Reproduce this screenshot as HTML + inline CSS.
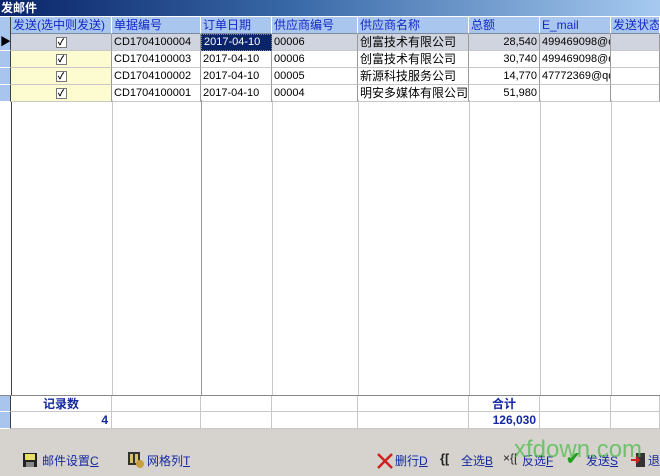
<!DOCTYPE html>
<html><head><meta charset="utf-8"><style>
*{margin:0;padding:0;box-sizing:border-box}
body{width:660px;height:476px;overflow:hidden;background:#fff;font-family:"Liberation Sans","Noto Sans CJK SC",sans-serif;font-size:11px;position:relative}
.a{position:absolute;white-space:nowrap;overflow:hidden}
#title{left:0;top:0;width:660px;height:16px;background:linear-gradient(90deg,#0a246a,#3a6aa8 45%,#a6caf0);color:#fff;font-weight:bold;font-size:12px;line-height:16px;padding-left:1px}
.h{top:17px;height:17px;background:#a8c6ee;color:#1428c8;line-height:16px;padding-left:2px;border-right:1px solid #fff;border-bottom:1px solid #7a8aa0;font-size:12px}
.c{height:17px;line-height:16px;padding:0 2px;border-right:1px solid #999;border-bottom:1px solid #c8c8c8;color:#000;font-size:11px}
.z{font-size:12px}
.r{text-align:right}
.rh{left:0;width:11px;height:17px;background:#a9c5ee;border-right:1px solid #404040;border-bottom:1px solid #fff}
.vl{top:100px;height:296px;width:1px;background:#c8c8c8}
.cb{display:inline-block;width:11px;height:11px;border:1px solid #777;background:#fff;font-size:9px;line-height:9px;text-align:center;vertical-align:middle;font-weight:bold}
.f{color:#1428a0;font-weight:bold;line-height:16px;height:17px;border-right:1px solid #c8c8c8;border-bottom:1px solid #c8c8c8;font-size:12px}
.tb{color:#1428a0;font-size:12px;top:452px}
u{text-decoration:underline}
</style></head><body>
<div class="a" id="title">发邮件</div>
<div class="a" style="left:0;top:17px;width:11px;height:17px;background:#a8c6ee;border-right:1px solid #404040"></div>
<div class="a h" style="left:11px;width:101px">发送(选中则发送)</div>
<div class="a h" style="left:112px;width:89px">单据编号</div>
<div class="a h" style="left:201px;width:71px">订单日期</div>
<div class="a h" style="left:272px;width:86px">供应商编号</div>
<div class="a h" style="left:358px;width:111px">供应商名称</div>
<div class="a h" style="left:469px;width:71px">总额</div>
<div class="a h" style="left:540px;width:71px">E_mail</div>
<div class="a h" style="left:611px;width:49px">发送状态</div>

<div class="a rh" style="top:34px;font-size:11px;line-height:16px;color:#000">&#9654;</div>
<div class="a rh" style="top:51px"></div>
<div class="a rh" style="top:68px"></div>
<div class="a rh" style="top:85px"></div>
<div class="a" style="left:11px;top:100px;width:1px;height:296px;background:#404040"></div>

<div class="a" style="left:11px;top:34px;width:649px;height:17px;background:#d0d4de"></div>
<div class="a" style="left:11px;top:51px;width:101px;height:51px;background:#fdfcd0"></div>

<div class="a c" style="left:11px;top:34px;width:101px;text-align:center"><span class="cb">✓</span></div>
<div class="a c" style="left:11px;top:51px;width:101px;text-align:center"><span class="cb">✓</span></div>
<div class="a c" style="left:11px;top:68px;width:101px;text-align:center"><span class="cb">✓</span></div>
<div class="a c" style="left:11px;top:85px;width:101px;text-align:center"><span class="cb">✓</span></div>

<div class="a c" style="left:112px;top:34px;width:89px">CD1704100004</div>
<div class="a c" style="left:112px;top:51px;width:89px">CD1704100003</div>
<div class="a c" style="left:112px;top:68px;width:89px">CD1704100002</div>
<div class="a c" style="left:112px;top:85px;width:89px">CD1704100001</div>

<div class="a c" style="left:201px;top:34px;width:71px;background:#0a246a;color:#fff;border:1px dotted #888;line-height:14px">2017-04-10</div>
<div class="a c" style="left:201px;top:51px;width:71px">2017-04-10</div>
<div class="a c" style="left:201px;top:68px;width:71px">2017-04-10</div>
<div class="a c" style="left:201px;top:85px;width:71px">2017-04-10</div>

<div class="a c" style="left:272px;top:34px;width:86px">00006</div>
<div class="a c" style="left:272px;top:51px;width:86px">00006</div>
<div class="a c" style="left:272px;top:68px;width:86px">00005</div>
<div class="a c" style="left:272px;top:85px;width:86px">00004</div>

<div class="a c z" style="left:358px;top:34px;width:111px">创富技术有限公司</div>
<div class="a c z" style="left:358px;top:51px;width:111px">创富技术有限公司</div>
<div class="a c z" style="left:358px;top:68px;width:111px">新源科技服务公司</div>
<div class="a c z" style="left:358px;top:85px;width:111px">明安多媒体有限公司</div>

<div class="a c r" style="left:469px;top:34px;width:71px">28,540</div>
<div class="a c r" style="left:469px;top:51px;width:71px">30,740</div>
<div class="a c r" style="left:469px;top:68px;width:71px">14,770</div>
<div class="a c r" style="left:469px;top:85px;width:71px">51,980</div>

<div class="a c" style="left:540px;top:34px;width:71px">499469098@qq</div>
<div class="a c" style="left:540px;top:51px;width:71px">499469098@qq</div>
<div class="a c" style="left:540px;top:68px;width:71px">47772369@qq</div>
<div class="a c" style="left:540px;top:85px;width:71px"></div>
<div class="a c" style="left:611px;top:34px;width:49px"></div>
<div class="a c" style="left:611px;top:51px;width:49px"></div>
<div class="a c" style="left:611px;top:68px;width:49px"></div>
<div class="a c" style="left:611px;top:85px;width:49px"></div>

<div class="a vl" style="left:112px"></div>
<div class="a vl" style="left:201px;background:#999"></div>
<div class="a vl" style="left:272px"></div>
<div class="a vl" style="left:358px"></div>
<div class="a vl" style="left:469px"></div>
<div class="a vl" style="left:540px"></div>
<div class="a vl" style="left:611px"></div>

<div class="a" style="left:0;top:395px;width:660px;height:1px;background:#888"></div>
<div class="a rh" style="top:396px;height:16px"></div>
<div class="a rh" style="top:412px;height:17px"></div>
<div class="a f" style="left:11px;top:396px;width:101px;text-align:center;height:16px">记录数</div>
<div class="a f" style="left:11px;top:412px;width:101px;text-align:right;padding-right:3px">4</div>
<div class="a f" style="left:112px;top:396px;width:89px;height:16px"></div>
<div class="a f" style="left:112px;top:412px;width:89px"></div>
<div class="a f" style="left:201px;top:396px;width:71px;height:16px"></div>
<div class="a f" style="left:201px;top:412px;width:71px"></div>
<div class="a f" style="left:272px;top:396px;width:86px;height:16px"></div>
<div class="a f" style="left:272px;top:412px;width:86px"></div>
<div class="a f" style="left:358px;top:396px;width:111px;height:16px"></div>
<div class="a f" style="left:358px;top:412px;width:111px"></div>
<div class="a f" style="left:469px;top:396px;width:71px;text-align:center;height:16px">合计</div>
<div class="a f" style="left:469px;top:412px;width:71px;text-align:right;padding-right:3px">126,030</div>
<div class="a f" style="left:540px;top:396px;width:71px;height:16px"></div>
<div class="a f" style="left:540px;top:412px;width:71px"></div>
<div class="a f" style="left:611px;top:396px;width:49px;height:16px"></div>
<div class="a f" style="left:611px;top:412px;width:49px"></div>

<div class="a" style="left:0;top:429px;width:660px;height:47px;background:#d6d3ce"></div>
<svg class="a" style="left:22px;top:452px" width="16" height="16"><rect x="1" y="1" width="14" height="14" fill="#222"/><rect x="3" y="2" width="10" height="6" fill="#e8e060"/><rect x="4" y="10" width="8" height="5" fill="#888"/></svg>
<div class="a tb" style="left:42px">邮件设置<u>C</u></div>
<svg class="a" style="left:127px;top:451px" width="18" height="18"><rect x="1" y="1" width="12" height="13" fill="#333"/><rect x="3" y="3" width="3" height="9" fill="#d8c070"/><rect x="8" y="3" width="3" height="9" fill="#d8c070"/><circle cx="13" cy="13" r="4" fill="#c8a040"/></svg>
<div class="a tb" style="left:147px">网格列<u>T</u></div>
<svg class="a" style="left:376px;top:452px" width="18" height="18"><path d="M2 2L16 16M16 2L2 16" stroke="#d02020" stroke-width="2.5"/></svg>
<div class="a tb" style="left:395px">删行<u>D</u></div>
<div class="a" style="left:440px;top:451px;font-weight:bold;font-size:13px;color:#222">{[</div>
<div class="a tb" style="left:461px">全选<u>B</u></div>
<div class="a" style="left:503px;top:451px;font-size:12px;color:#222">×{[</div>
<div class="a tb" style="left:522px">反选<u>F</u></div>
<div class="a" style="left:566px;top:449px;color:#20a020;font-size:17px;font-weight:bold">✔</div>
<div class="a tb" style="left:586px">发送<u>S</u></div>
<svg class="a" style="left:630px;top:452px" width="16" height="16"><rect x="6" y="1" width="9" height="14" fill="#333"/><path d="M1 8h8M6 5l3 3-3 3" stroke="#d02020" stroke-width="2" fill="none"/></svg>
<div class="a tb" style="left:648px;width:12px">退</div>
<div class="a" style="left:514px;top:436px;width:140px;color:#4bbd4b;font-size:24px;line-height:28px;opacity:.75">xfdown.com</div>
</body></html>
